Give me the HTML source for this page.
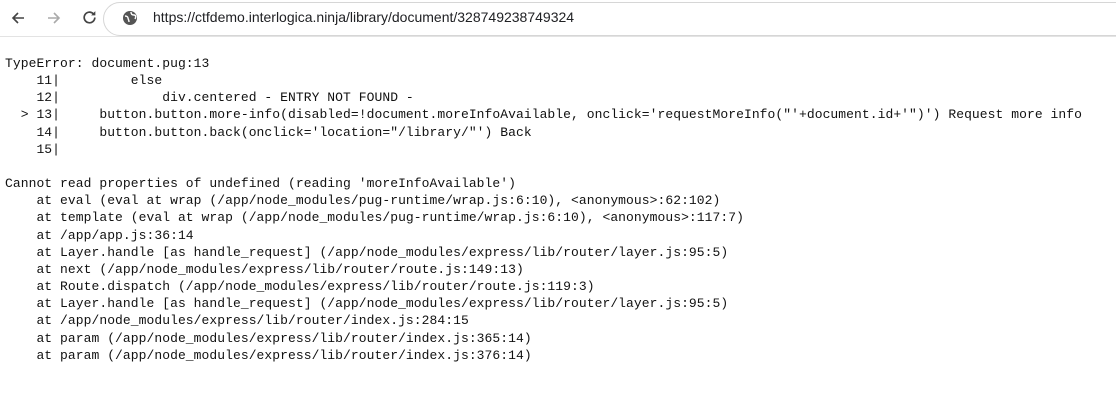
<!DOCTYPE html>
<html><head><style>
body{margin:0;width:1116px;height:406px;background:#fff;overflow:hidden;position:relative}
.bar{position:absolute;left:0;top:0;width:1116px;height:36px;border-bottom:1px solid #e3e3e3;background:#fff}
.pill{position:absolute;left:103px;top:2px;width:1030px;height:32px;border:1px solid #d6d6d6;border-radius:17px;background:#fff}
.url{position:absolute;left:153px;top:9px;font:14px "Liberation Sans",sans-serif;color:#202124}
pre{position:absolute;left:5px;top:55px;margin:0;font:13px/17.15px "Liberation Mono",monospace;letter-spacing:0.06px;color:#111}
</style></head><body>
<div class="bar">
<svg style="position:absolute;left:10px;top:10px" width="16" height="16" viewBox="0 0 16 16"><path d="M14 8H3M8 3L3 8l5 5" stroke="#444" stroke-width="1.6" fill="none"/></svg>
<svg style="position:absolute;left:46px;top:10px" width="16" height="16" viewBox="0 0 16 16"><path d="M2 8h11M8 3l5 5-5 5" stroke="#aaa" stroke-width="1.6" fill="none"/></svg>
<svg style="position:absolute;left:81px;top:9px" width="17" height="17" viewBox="0 0 16 16"><path d="M13 8a5 5 0 1 1-1.5-3.6" stroke="#444" stroke-width="1.6" fill="none"/><path d="M13.5 2v4h-4z" fill="#444"/></svg>
<div class="pill"></div>
<svg style="position:absolute;left:122px;top:10px" width="16" height="16" viewBox="0 0 16 16"><circle cx="8" cy="8" r="7" fill="#555"/><path d="M3 6c2 0 3 1 3 2s1 2 1 4M9 2c0 2 1 3 3 3s2 2 1 4" stroke="#fff" stroke-width="1.4" fill="none"/></svg>
<div class="url">https://ctfdemo.interlogica.ninja/library/document/328749238749324</div>
</div>
<pre>TypeError: document.pug:13
    11|         else
    12|             div.centered - ENTRY NOT FOUND -
  &gt; 13|     button.button.more-info(disabled=!document.moreInfoAvailable, onclick='requestMoreInfo("'+document.id+'")') Request more info
    14|     button.button.back(onclick='location="/library/"') Back
    15|

Cannot read properties of undefined (reading 'moreInfoAvailable')
    at eval (eval at wrap (/app/node_modules/pug-runtime/wrap.js:6:10), &lt;anonymous&gt;:62:102)
    at template (eval at wrap (/app/node_modules/pug-runtime/wrap.js:6:10), &lt;anonymous&gt;:117:7)
    at /app/app.js:36:14
    at Layer.handle [as handle_request] (/app/node_modules/express/lib/router/layer.js:95:5)
    at next (/app/node_modules/express/lib/router/route.js:149:13)
    at Route.dispatch (/app/node_modules/express/lib/router/route.js:119:3)
    at Layer.handle [as handle_request] (/app/node_modules/express/lib/router/layer.js:95:5)
    at /app/node_modules/express/lib/router/index.js:284:15
    at param (/app/node_modules/express/lib/router/index.js:365:14)
    at param (/app/node_modules/express/lib/router/index.js:376:14)</pre>
</body></html>
